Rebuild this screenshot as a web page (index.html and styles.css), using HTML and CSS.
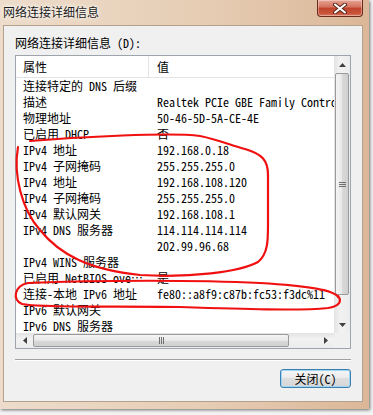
FILE: index.html
```html
<html>
	<head>
		<meta charset="utf-8">
		<link rel="stylesheet" href="styles.css">
	</head>
	<body>
		<div class="window">
			<div class="titlebar">
				<span class="title">网络连接详细信息</span>
				<div class="close">
					<svg width="14" height="11" viewBox="0 0 14 11">
						<path d="M2 1.5 L12 9.5 M12 1.5 L2 9.5" stroke="#5a2a20" stroke-width="4" stroke-linecap="round"/>
						<path d="M2 1.5 L12 9.5 M12 1.5 L2 9.5" stroke="#ffffff" stroke-width="2" stroke-linecap="round"/>
					</svg>
				</div>
			</div>

			<div class="client">
				<div class="label">网络连接详细信息 (D):</div>

				<div class="listview">
					<div class="view">
						<div class="header">
							<div class="c1">属性</div>
							<div class="c2">值</div>
						</div>
						<div class="row"><div class="c1">连接特定的 DNS 后缀</div><div class="c2"></div></div>
						<div class="row"><div class="c1">描述</div><div class="c2">Realtek PCIe GBE Family Controller</div></div>
						<div class="row"><div class="c1">物理地址</div><div class="c2">50-46-5D-5A-CE-4E</div></div>
						<div class="row"><div class="c1">已启用 DHCP</div><div class="c2">否</div></div>
						<div class="row"><div class="c1">IPv4 地址</div><div class="c2">192.168.0.18</div></div>
						<div class="row"><div class="c1">IPv4 子网掩码</div><div class="c2">255.255.255.0</div></div>
						<div class="row"><div class="c1">IPv4 地址</div><div class="c2">192.168.108.120</div></div>
						<div class="row"><div class="c1">IPv4 子网掩码</div><div class="c2">255.255.255.0</div></div>
						<div class="row"><div class="c1">IPv4 默认网关</div><div class="c2">192.168.108.1</div></div>
						<div class="row"><div class="c1">IPv4 DNS 服务器</div><div class="c2">114.114.114.114</div></div>
						<div class="row"><div class="c1"></div><div class="c2">202.99.96.68</div></div>
						<div class="row"><div class="c1">IPv4 WINS 服务器</div><div class="c2"></div></div>
						<div class="row"><div class="c1">已启用 NetBIOS over Tcpip</div><div class="c2">是</div></div>
						<div class="row"><div class="c1">连接-本地 IPv6 地址</div><div class="c2">fe80::a8f9:c87b:fc53:f3dc%11</div></div>
						<div class="row"><div class="c1">IPv6 默认网关</div><div class="c2"></div></div>
						<div class="row"><div class="c1">IPv6 DNS 服务器</div><div class="c2"></div></div>
					</div>

					<div class="vscroll">
						<div class="arrow"><svg width="7" height="4"><polygon points="0,4 7,4 3.5,0" fill="#404040"/></svg></div>
						<div class="thumb v">
							<svg width="7" height="7"><path d="M0 1.5h7M0 3.5h7M0 5.5h7" stroke="#6f6f6f" stroke-width="1"/></svg>
						</div>
						<div class="track"></div>
						<div class="arrow"><svg width="7" height="4"><polygon points="0,0 7,0 3.5,4" fill="#404040"/></svg></div>
					</div>

					<div class="hscroll">
						<div class="arrow"><svg width="4" height="7"><polygon points="4,0 4,7 0,3.5" fill="#404040"/></svg></div>
						<div class="thumb h">
							<svg width="7" height="7"><path d="M1.5 0v7M3.5 0v7M5.5 0v7" stroke="#6f6f6f" stroke-width="1"/></svg>
						</div>
						<div class="track"></div>
						<div class="arrow"><svg width="4" height="7"><polygon points="0,0 0,7 4,3.5" fill="#404040"/></svg></div>
					</div>

					<div class="corner"></div>
				</div>

				<div class="sep"></div>

				<div class="footer">
					<button class="btn">关闭(C)</button>
				</div>
			</div>

			<!-- red marks drawn over the screenshot -->
			<svg class="marks" width="373" height="415" viewBox="0 0 373 415">
				<path d="M18 147 C13 175, 22 210, 40 230 C60 255, 90 270, 140 275 C190 278, 240 272, 258 262 C268 254, 268 240, 268 225 L268 175 C268 160, 262 154, 245 149 C232 146, 220 140, 200 136 C170 132, 80 137, 30 141" />
				<path d="M338 297 C334 290, 310 286, 260 283 C200 280, 100 280, 28 283 C14 286, 12 300, 22 304 C40 308, 120 306, 180 307 C240 309, 300 311, 328 308 C340 306, 342 301, 338 296" />
			</svg>
		</div>
	</body>
</html>
```

FILE: styles.css
```css
body {
	margin: 0;
	background: #f3f3f3;
	font-family: "Noto Sans Mono CJK SC", "Liberation Mono", "Noto Sans CJK SC", monospace;
	font-size: 12px;
	color: #000;
}

.window {
	position: relative;
	width: 369px;
	height: 409px;
	display: flex;
	flex-direction: column;
	background: linear-gradient(to right, #eddccb, #e6cdb4 55%, #dbb798);
	box-shadow: 1px 1px 3px rgba(0, 0, 0, 0.55);
}

.titlebar {
	height: 25px;
	display: flex;
	justify-content: space-between;
	align-items: flex-start;
}

.title {
	font-family: "Noto Sans CJK SC", sans-serif;
	font-size: 12px;
	line-height: 16px;
	padding: 4px 0 0 3px;
	color: #1a1a1a;
	text-shadow: 0 0 6px #fff, 0 0 3px #fff;
}

.close {
	width: 46px;
	height: 17px;
	margin-right: 6px;
	box-sizing: border-box;
	border: 1px solid #6c2a1d;
	border-top: none;
	border-radius: 0 0 4px 4px;
	background: linear-gradient(#e9a595, #d1705c 45%, #c0432c 50%, #c9543a 85%, #e0826a);
	display: flex;
	align-items: center;
	justify-content: center;
	box-shadow: inset 0 0 0 1px rgba(255, 255, 255, 0.35);
}

.client {
	width: 360px;
	height: 377px;
	margin-left: 3px;
	box-sizing: border-box;
	padding: 0 11px;
	background: #f0f0f0;
	border: 1px solid #b3a18d;
	display: flex;
	flex-direction: column;
}

.label {
	margin-top: 9px;
	line-height: 16px;
	white-space: nowrap;
}

.listview {
	margin-top: 4px;
	height: 294px;
	box-sizing: border-box;
	border: 1px solid #9ea4ab;
	background: #fff;
	display: grid;
	grid-template-columns: 1fr 16px;
	grid-template-rows: 1fr 15px;
	overflow: hidden;
}

.view {
	overflow: hidden;
	white-space: nowrap;
}

.header {
	display: flex;
	height: 21px;
	line-height: 21px;
	border-bottom: 1px solid #e2e4e7;
}

.header .c1 {
	border-right: 1px solid #e2e4e7;
}

.row {
	display: flex;
	height: 16px;
	line-height: 16px;
}

.c1 {
	width: 133px;
	flex: none;
	box-sizing: border-box;
	padding-left: 7px;
	overflow: hidden;
	text-overflow: ellipsis;
}

.c2 {
	width: 300px;
	flex: none;
	padding-left: 8px;
}

.vscroll, .hscroll {
	display: flex;
	background: linear-gradient(to right, #e3e3e3, #f2f2f2 40%, #ececec);
}

.vscroll {
	flex-direction: column;
}

.hscroll {
	background: linear-gradient(#e3e3e3, #f2f2f2 40%, #ececec);
}

.arrow {
	flex: none;
	width: 16px;
	height: 17px;
	display: flex;
	align-items: center;
	justify-content: center;
}

.hscroll .arrow {
	width: 17px;
	height: 15px;
}

.track {
	flex: 1;
}

.thumb {
	flex: none;
	box-sizing: border-box;
	border: 1px solid #9a9a9a;
	border-radius: 2px;
	display: flex;
	align-items: center;
	justify-content: center;
}

.thumb.v {
	height: 222px;
	margin: 0 1px;
	background: linear-gradient(to right, #f4f4f4, #e8e8e8 50%, #d9d9d9 51%, #d0d0d0);
}

.thumb.h {
	width: 256px;
	margin: 1px 0;
	background: linear-gradient(#f4f4f4, #e8e8e8 50%, #d9d9d9 51%, #d0d0d0);
}

.corner {
	background: #f0f0f0;
}

.sep {
	margin-top: 10px;
	height: 1px;
	background: #a0a0a0;
	border-bottom: 1px solid #fff;
}

.footer {
	display: flex;
	justify-content: flex-end;
	margin-top: 8px;
}

.btn {
	width: 71px;
	height: 19px;
	padding: 0;
	font: inherit;
	line-height: 17px;
	color: #000;
	border: 1px solid #3c7fb1;
	border-radius: 3px;
	background: linear-gradient(#f6f6f6, #ececec 45%, #dedede 50%, #d6d6d6);
	box-shadow: inset 0 0 0 1px #9fd6f3;
}

.marks {
	position: absolute;
	left: 0;
	top: 0;
	pointer-events: none;
	fill: none;
	stroke: #f01010;
	stroke-width: 2.2;
	stroke-linecap: round;
}
```
